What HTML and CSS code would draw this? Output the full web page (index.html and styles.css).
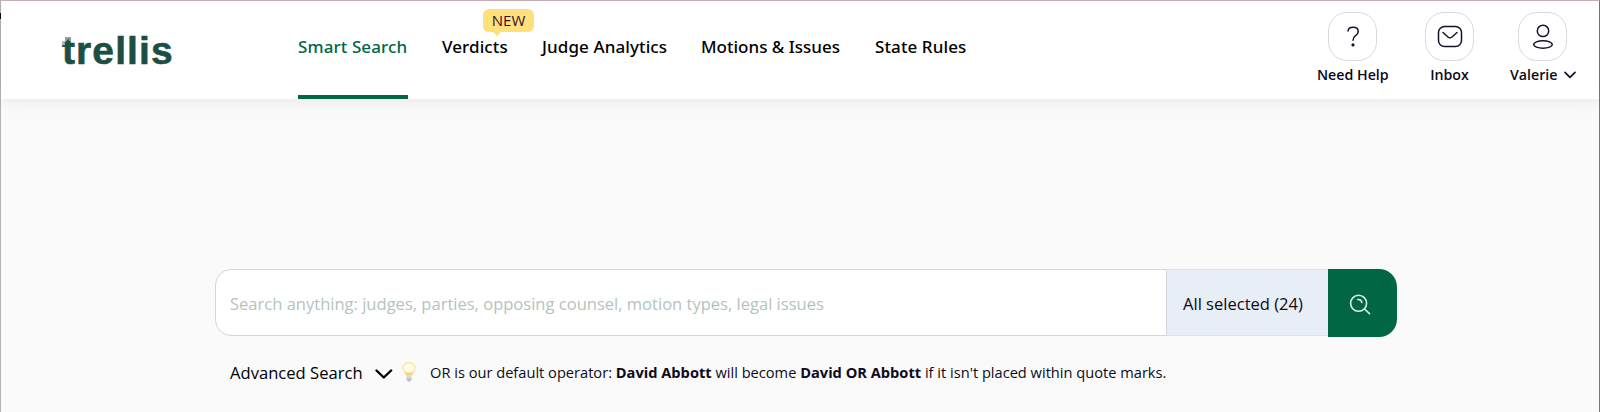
FILE: index.html
```html
<!DOCTYPE html>
<html>
<head lang="en">
    <meta charset="UTF-8">
    <title>trellis</title>
    <link rel="stylesheet" href="styles.css">
</head>
<body>
    <div id="page">
        <div id="header">
            <div class="logo">
                <span>trellis</span>
                <svg class="leaf" width="10" height="10" viewBox="0 0 10 10">
                    <path d="M0 4h3v4h-3z" fill="#a9bdb7"/>
                    <path d="M3 0h6v4h-6z" fill="#8aa59d"/>
                    <path d="M2 6.500l5-5v5z" fill="#1c4f43"/>
                </svg>
            </div>
            <ul id="nav">
                <li class="selected">Smart Search</li>
                <li class="verdicts">Verdicts<span class="badge">NEW</span></li>
                <li class="judge">Judge Analytics</li>
                <li class="motions">Motions &amp; Issues</li>
                <li class="rules">State Rules</li>
            </ul>
            <div id="tools">
                <div class="tool help">
                    <div class="icon">
                        <svg width="48" height="48" viewBox="0 0 48 48">
                            <path d="M19 18c.3-2.400 2.300-3.800 5-3.800 3 0 5.200 1.600 5.200 4.200 0 2-1 3.100-2.600 4.200-1.900 1.400-2.600 2.400-2.600 4.700"/>
                            <circle class="dot" cx="24" cy="31.900" r="1.600"/>
                        </svg>
                    </div>
                    <p>Need Help</p>
                </div>
                <div class="tool inbox">
                    <div class="icon">
                        <svg width="48" height="48" viewBox="0 0 48 48">
                            <rect x="12.500" y="13.500" width="23" height="20" rx="6"/>
                            <path d="M17 19.500l5 4.500q2 1.500 4 0l5-4.500"/>
                        </svg>
                    </div>
                    <p>Inbox</p>
                </div>
                <div class="tool user">
                    <div class="icon">
                        <svg width="48" height="48" viewBox="0 0 48 48">
                            <circle cx="24" cy="17.900" r="5.700"/>
                            <ellipse cx="24" cy="31.500" rx="9.300" ry="3.700"/>
                        </svg>
                    </div>
                    <p>Valerie<svg class="down" width="12" height="8" viewBox="0 0 12 8"><path d="M1 1.300l5 5 5-5"/></svg></p>
                </div>
            </div>
        </div>
        <div id="main">
            <div id="search">
                <div class="field"><span>Search anything: judges, parties, opposing counsel, motion types, legal issues</span></div>
                <div class="states"><span>All selected (24)</span></div>
                <div class="btn">
                    <svg width="22" height="22" viewBox="0 0 22 22">
                        <circle cx="9.600" cy="9.300" r="8"/>
                        <path d="M15.500 15l5 4.700M8.800 5.500c2.200-.2 3.700 1 4 3"/>
                    </svg>
                </div>
            </div>
            <div id="options">
                <span class="advanced">Advanced Search</span>
                <svg class="arrow" width="18" height="11" viewBox="0 0 18 11"><path d="M1.500 1.500l7.300 7 7.300-7"/></svg>
                <svg class="bulb" width="14" height="20" viewBox="0 0 14 20">
                    <path d="M4.500 13C4 10.500 1 9.500 1 6a6 5.500 0 0 1 12 0c0 3.500-3 4.500-3.500 7z" fill="#fffbea" stroke="#fae6a8" stroke-width="1.400"/>
                    <path d="M2.500 9.500q4.500 2.500 9 0L9.700 13.500H4.300z" fill="#f6d56b"/>
                    <path d="M4.500 14.500h5v3l-1.500 2H6l-1.500-2z" fill="#b9bbbd"/>
                    <path d="M4.500 16h5" stroke="#e4e4e4"/>
                </svg>
                <p class="tip">OR is our default operator: <b>David Abbott</b> will become <b>David OR Abbott</b> if it isn't placed within quote marks.</p>
            </div>
        </div>
    </div>
</body>
</html>
```
FILE: styles.css
```css
*{
    margin: 0;
    padding: 0;
    box-sizing: border-box;
}
li{
    list-style: none;
}
body{
    font-family: "Open Sans", "Noto Sans", sans-serif;
    color: #0d0a20;
}
svg{
    display: block;
    fill: none;
    stroke-linecap: round;
    stroke-linejoin: round;
}
#page{
    height: 412px;
    position: relative;
    background: #fafafa;
    border-top: 1px solid #cdb2b7;
    border-left: 1px solid #b4b2b5;
    border-right: 1px solid #77777a;
}
#page:before{
    content: "";
    position: absolute;
    left: -1px;
    top: 12px;
    width: 1px;
    height: 6px;
    background: #0d0a20;
}
#header{
    height: 98px;
    display: flex;
    background: #fff;
    box-shadow: 0 2px 16px rgba(0,0,0,.08);
}
.logo{
    width: 297px;
    padding: 26px 0 0 61px;
    position: relative;
    font: bold 39px/48px "Liberation Sans", sans-serif;
    letter-spacing: 1.1px;
    color: #1c4f43;
    -webkit-text-stroke: .6px #1c4f43;
}
.leaf{
    position: absolute;
    left: 61px;
    top: 36px;
}
.leaf path{
    stroke: none;
}
#nav{
    display: flex;
    gap: 34px;
    font: 500 17px/24px "Noto Sans", sans-serif;
    letter-spacing: .1px;
    color: #000;
    white-space: nowrap;
}
#nav li{
    height: 98px;
    padding-top: 34px;
    position: relative;
}
#nav .selected{
    width: 110px;
    color: #006644;
    border-bottom: 4px solid #006644;
}
#nav .verdicts{
    width: 66px;
}
#nav .judge{
    width: 125px;
}
#nav .motions{
    width: 140px;
    letter-spacing: 0;
}
.badge{
    position: absolute;
    left: 41px;
    top: 8px;
    width: 51px;
    height: 23px;
    border-radius: 6px;
    background: #ffe07a;
    color: #32102f;
    font: 400 15px/23px "Open Sans", sans-serif;
    letter-spacing: 0;
    text-align: center;
}
.badge:after{
    content: "";
    position: absolute;
    left: 9px;
    top: 22px;
    border: 5px solid transparent;
    border-top-color: #ffe07a;
    border-bottom: 0;
}
#tools{
    margin-left: auto;
    padding: 11px 23px 0 0;
    display: flex;
}
.tool .icon{
    width: 49px;
    height: 49px;
    margin: 0 auto;
    border: 1px solid #d9d9dc;
    border-radius: 19px;
}
.tool svg{
    stroke: #15122a;
    stroke-width: 1.5;
}
.tool .dot{
    fill: #15122a;
    stroke: none;
}
.tool p{
    font: 600 14.200px/20px "Open Sans", sans-serif;
    padding-top: 4px;
    white-space: nowrap;
}
.help{
    width: 72px;
}
.help .icon{
    margin-left: 11px;
}
.inbox{
    width: 49px;
    margin-left: 36px;
    text-align: center;
}
.user{
    width: 66px;
    margin-left: 36px;
}
.user .icon{
    margin-left: 8px;
}
.user p{
    display: flex;
    align-items: center;
    justify-content: space-between;
}
.tool .down{
    stroke-width: 1.700;
}
#main{
    padding: 170px 202px 0 214px;
}
#search{
    height: 69px;
    display: flex;
    align-items: flex-start;
    white-space: nowrap;
    font-size: 16.550px;
}
.field{
    width: 952px;
    height: 67px;
    padding: 22px 0 0 14px;
    line-height: 24px;
    border: 1px solid #cfd6dd;
    border-radius: 16px 0 0 16px;
    background: #fff;
    color: #b3c4bc;
}
.states{
    width: 161px;
    height: 67px;
    padding: 22px 0 0 16px;
    line-height: 24px;
    background: #e7eef6;
    border: solid #dce3e9;
    border-width: 1px 0;
}
.btn{
    width: 69px;
    height: 68px;
    padding: 25px 0 0 21px;
    border-radius: 0 18px 18px 0;
    background: #006644;
}
.btn svg{
    stroke: #e0eee8;
    stroke-width: 1.600;
}
#options{
    display: flex;
    align-items: center;
    height: 28px;
    margin-top: 20px;
    padding-left: 15px;
    white-space: nowrap;
}
.advanced{
    width: 145px;
    font-size: 16.600px;
    color: #000;
}
.arrow{
    margin-top: 4px;
    stroke: #000;
    stroke-width: 2.400;
}
.bulb{
    margin-left: 9px;
}
.tip{
    margin-left: 14px;
    font-size: 14.630px;
}
```
